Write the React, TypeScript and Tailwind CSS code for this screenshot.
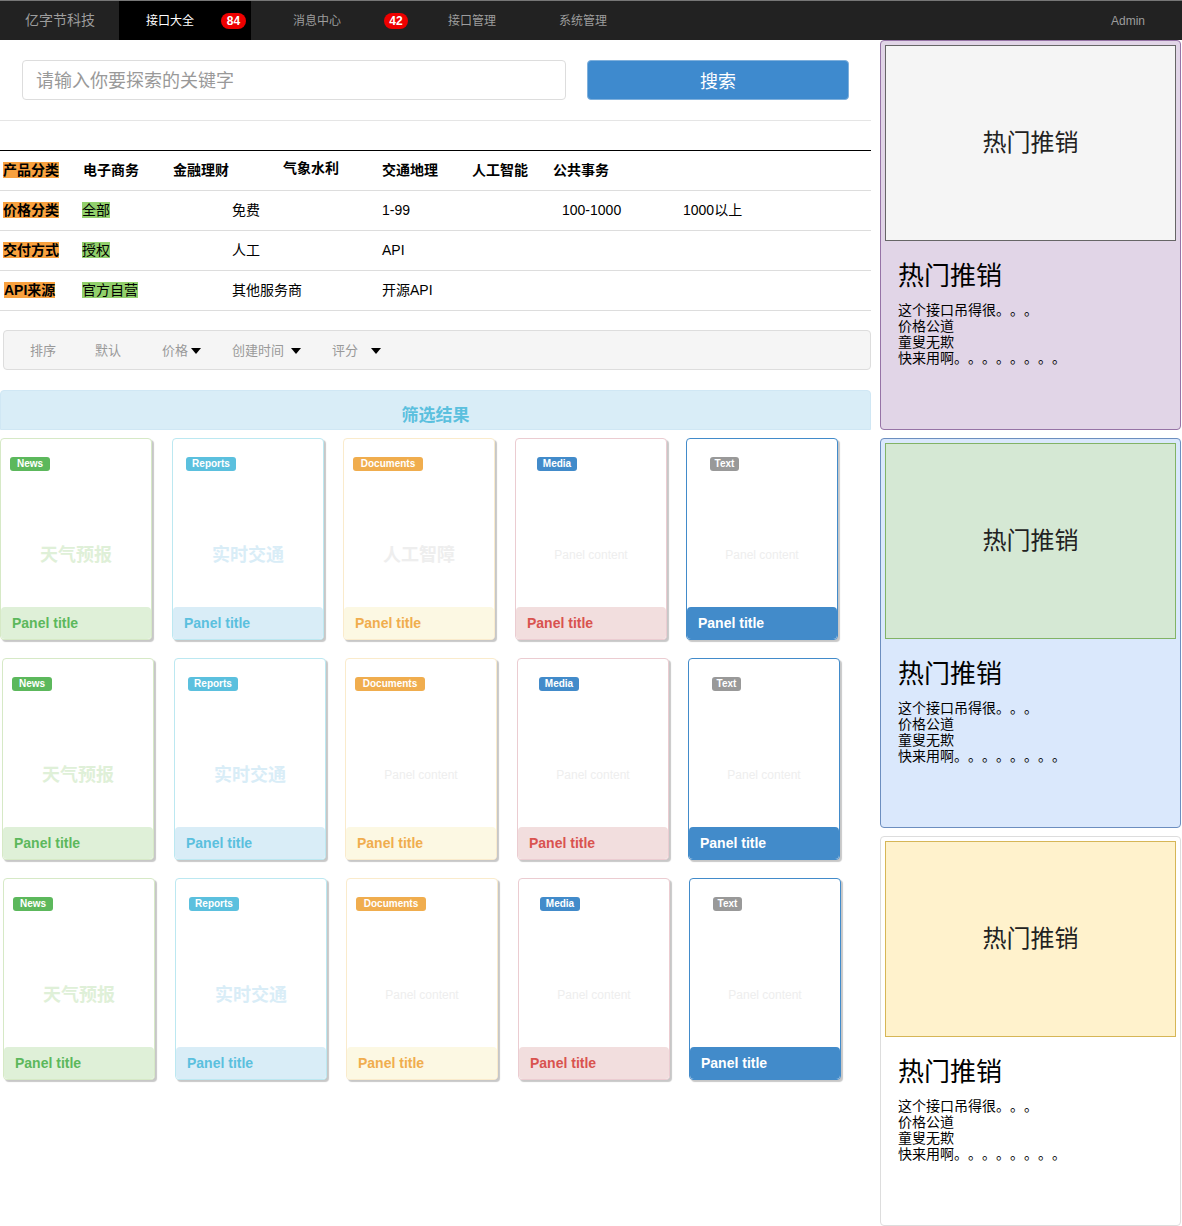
import React from "react";

const FONT = { fontFamily: '"Liberation Sans", "Noto Sans CJK SC", sans-serif' };

type Kind = "news" | "reports" | "docs" | "media" | "text";

const kinds: Record<Kind, { label: string; badge: string; border: string; footer: string; title: string; bpl: string; bw: string }> = {
  news: { label: "News", badge: "bg-[#5cb85c]", border: "border-[#d6e9c6]", footer: "bg-[#dff0d8]", title: "text-[#5cb85c]", bpl: "ml-[9px]", bw: "w-[40px]" },
  reports: { label: "Reports", badge: "bg-[#5bc0de]", border: "border-[#bce8f1]", footer: "bg-[#d9edf7]", title: "text-[#5bc0de]", bpl: "ml-[13px]", bw: "w-[50px]" },
  docs: { label: "Documents", badge: "bg-[#f0ad4e]", border: "border-[#faebcc]", footer: "bg-[#fcf8e3]", title: "text-[#f0ad4e]", bpl: "ml-[9px]", bw: "w-[70px]" },
  media: { label: "Media", badge: "bg-[#428bca]", border: "border-[#ebccd1]", footer: "bg-[#f2dede]", title: "text-[#d9534f]", bpl: "ml-[21px]", bw: "w-[40px]" },
  text: { label: "Text", badge: "bg-[#999999]", border: "border-[#428bca]", footer: "bg-[#428bca]", title: "text-white", bpl: "ml-[23px]", bw: "w-[29px]" },
};

function Card({ kind, content }: { kind: Kind; content: string }) {
  const k = kinds[kind];
  const isPanel = content === "Panel content";
  const contentColor =
    content === "天气预报" ? "text-[#dff0d8]" : content === "实时交通" ? "text-[#d9edf7]" : "text-[#eeeeee]";
  return (
    <div className={`w-[152px] h-[202px] border ${k.border} rounded-[4px] bg-white shadow-[2px_2px_1px_rgba(0,0,0,0.22)] flex flex-col shrink-0`}>
      <div className={`mt-[18px] ${k.bpl} ${k.bw} h-[14px] ${k.badge} rounded-[3px] text-white text-[10px] font-bold leading-[14px] text-center`}>
        {k.label}
      </div>
      <div className={`mt-[73px] h-[22px] leading-[22px] text-center ${contentColor} ${isPanel ? "text-[12px]" : "text-[18px] font-bold"}`}>
        {content}
      </div>
      <div className={`mt-auto h-[32px] ${k.footer} rounded-[4px] pl-[11px] flex items-center`}>
        <span className={`${k.title} text-[14px] font-bold`}>Panel title</span>
      </div>
    </div>
  );
}

function CardRow({ offset, contents }: { offset: string; contents: string[] }) {
  const order: Kind[] = ["news", "reports", "docs", "media", "text"];
  const gaps = ["", "ml-[20px]", "ml-[19px]", "ml-[20px]", "ml-[19px]"];
  return (
    <div className={`flex ${offset}`}>
      {order.map((k, i) => (
        <div key={i} className={gaps[i]}>
          <Card kind={k} content={contents[i]} />
        </div>
      ))}
    </div>
  );
}

function Label({ children }: { children: React.ReactNode }) {
  return <span className="bg-[#f8a13f] font-bold text-black">{children}</span>;
}
function Green({ children }: { children: React.ReactNode }) {
  return <span className="bg-[#92d06c] text-black">{children}</span>;
}

function Caret() {
  return (
    <svg width="10" height="6" viewBox="0 0 10 6" className="inline-block">
      <path d="M0 0 L10 0 L5 6 Z" fill="#000" />
    </svg>
  );
}

function SidePanel({ outer, inner }: { outer: string; inner: string }) {
  return (
    <div className={`h-[390px] rounded-[4px] border ${outer} p-[4px] flex flex-col`}>
      <div className={`h-[196px] border ${inner} flex items-center justify-center pb-[5px] text-[24px] leading-[30px] text-[#222]`}>
        热门推销
      </div>
      <div className="pl-[13px]">
        <div className="mt-[16px] text-[26px] leading-[34px] text-black">热门推销</div>
        <div className="mt-[10px] text-[14px] leading-[16px] text-black [text-spacing-trim:space-all]">
          <div>这个接口吊得很。。。</div>
          <div>价格公道</div>
          <div>童叟无欺</div>
          <div>快来用啊。。。。。。。。</div>
        </div>
      </div>
    </div>
  );
}

export default function App() {
  return (
    <div className="w-[1182px] min-h-[1226px] bg-white" style={FONT}>
      {/* Navbar */}
      <div className="h-[40px] bg-[#222222] border-t border-[#777] flex items-stretch text-[12px]">
        <div className="ml-[25px] w-[94px] flex items-center text-[14px] text-[#9d9d9d]">亿字节科技</div>
        <div className="w-[132px] bg-black flex items-center">
          <span className="ml-[27px] text-white">接口大全</span>
          <span className="ml-[27px] w-[25px] h-[16px] rounded-full bg-[#ee0000] text-white font-bold text-[12px] leading-[16px] text-center">84</span>
        </div>
        <div className="flex items-center">
          <span className="ml-[42px] text-[#9d9d9d]">消息中心</span>
          <span className="ml-[43px] w-[24px] h-[16px] rounded-full bg-[#ee0000] text-white font-bold text-[12px] leading-[16px] text-center">42</span>
          <span className="ml-[40px] text-[#9d9d9d]">接口管理</span>
          <span className="ml-[63px] text-[#9d9d9d]">系统管理</span>
        </div>
        <div className="ml-auto mr-[37px] flex items-center text-[#9d9d9d]">Admin</div>
      </div>

      <div className="flex items-start">
        {/* Main column */}
        <div className="w-[871px]">
          <div className="pt-[20px] flex">
            <div className="ml-[22px] w-[544px] h-[40px] border border-[#dddddd] rounded-[4px] flex items-center pl-[13px] pt-[3px] text-[18px] text-[#999999]">
              请输入你要探索的关键字
            </div>
            <div className="ml-[21px] w-[262px] h-[40px] bg-[#3e8ace] border border-[#7fb0dc] rounded-[4px] flex items-center justify-center pt-[4px] text-[18px] text-white">
              搜索
            </div>
          </div>
          <div className="mt-[20px] border-t border-[#e5e5e5]" />
          <div className="mt-[29px] border-t border-black" />

          <div className="text-[14px] text-black">
            <div className="h-[40px] border-b border-[#dddddd] flex items-center pl-[3px] font-bold">
              <span className="w-[80px]"><Label>产品分类</Label></span>
              <span className="w-[90px]">电子商务</span>
              <span className="w-[110px]">金融理财</span>
              <span className="w-[99px] -mt-[4px]">气象水利</span>
              <span className="w-[90px]">交通地理</span>
              <span className="w-[81px]">人工智能</span>
              <span>公共事务</span>
            </div>
            <div className="h-[40px] border-b border-[#dddddd] flex items-center pl-[3px]">
              <span className="w-[79px]"><Label>价格分类</Label></span>
              <span className="w-[150px]"><Green>全部</Green></span>
              <span className="w-[150px]">免费</span>
              <span className="w-[180px]">1-99</span>
              <span className="w-[121px]">100-1000</span>
              <span>1000以上</span>
            </div>
            <div className="h-[40px] border-b border-[#dddddd] flex items-center pl-[3px]">
              <span className="w-[79px]"><Label>交付方式</Label></span>
              <span className="w-[150px]"><Green>授权</Green></span>
              <span className="w-[150px]">人工</span>
              <span>API</span>
            </div>
            <div className="h-[40px] border-b border-[#dddddd] flex items-center pl-[4px]">
              <span className="w-[78px]"><Label>API来源</Label></span>
              <span className="w-[150px]"><Green>官方自营</Green></span>
              <span className="w-[150px]">其他服务商</span>
              <span>开源API</span>
            </div>
          </div>

          <div className="mt-[19px] ml-[3px] w-[868px] h-[40px] bg-[#f5f5f5] border border-[#dddddd] rounded-[4px] flex items-center pt-[1px] text-[13px] text-[#999999]">
            <span className="ml-[26px] w-[65px]">排序</span>
            <span className="w-[67px]">默认</span>
            <span className="w-[70px] flex items-center">价格<span className="ml-[3px] flex"><Caret /></span></span>
            <span className="w-[100px] flex items-center">创建时间<span className="ml-[7px] flex"><Caret /></span></span>
            <span className="flex items-center">评分<span className="ml-[13px] flex"><Caret /></span></span>
          </div>

          <div className="mt-[20px] h-[40px] bg-[#d9edf7] rounded-t-[4px] border border-[#d0e7f4] flex justify-center pt-[14px] text-[17px] font-bold text-[#5bc0de] leading-[22px]">
            筛选结果
          </div>

          <div className="mt-[8px] flex flex-col gap-[18px]">
            <CardRow offset="" contents={["天气预报", "实时交通", "人工智障", "Panel content", "Panel content"]} />
            <CardRow offset="ml-[2px]" contents={["天气预报", "实时交通", "Panel content", "Panel content", "Panel content"]} />
            <CardRow offset="ml-[3px]" contents={["天气预报", "实时交通", "Panel content", "Panel content", "Panel content"]} />
          </div>
        </div>

        {/* Sidebar */}
        <div className="ml-[9px] w-[301px] flex flex-col gap-[8px]" style={{ fontFamily: '"Noto Sans CJK SC", sans-serif' }}>
          <SidePanel outer="border-[#9673a6] bg-[#e1d5e7]" inner="border-[#666666] bg-[#f5f5f5]" />
          <SidePanel outer="border-[#6c8ebf] bg-[#dae8fc]" inner="border-[#82b366] bg-[#d5e8d4]" />
          <SidePanel outer="border-[#dddddd] bg-white" inner="border-[#d6b656] bg-[#fff2cc]" />
        </div>
      </div>
    </div>
  );
}
